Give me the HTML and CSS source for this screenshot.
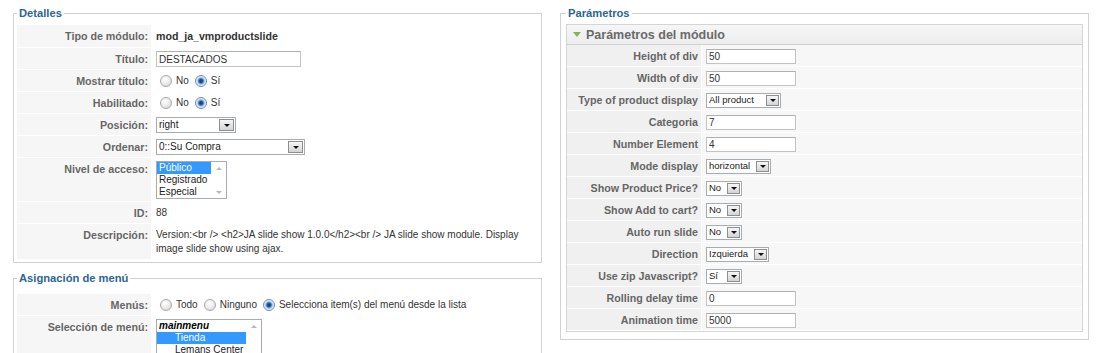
FILE: index.html
```html
<!DOCTYPE html>
<html lang="es">
<head>
  <meta charset="UTF-8">
  <title>Módulo: mod_ja_vmproductslide</title>
  <link rel="stylesheet" href="styles.css">
</head>
<body>

  <div class="page">

    <!-- Left column -->
    <div class="col">

      <fieldset class="box details">
        <legend>Detalles</legend>
        <div class="form">
          <div class="lbl">Tipo de módulo:</div>
          <div class="val text"><strong>mod_ja_vmproductslide</strong></div>

          <div class="lbl">Título:</div>
          <div class="val"><input class="txt" type="text" value="DESTACADOS"></div>

          <div class="lbl">Mostrar título:</div>
          <div class="val"><span class="radio"></span>No <span class="radio on"></span>Sí</div>

          <div class="lbl">Habilitado:</div>
          <div class="val"><span class="radio"></span>No <span class="radio on"></span>Sí</div>

          <div class="lbl">Posición:</div>
          <div class="val"><span class="sel w-pos">right<span class="arr"></span></span></div>

          <div class="lbl">Ordenar:</div>
          <div class="val"><span class="sel w-ord">0::Su Compra<span class="arr"></span></span></div>

          <div class="lbl">Nivel de acceso:</div>
          <div class="val">
            <div class="list list-access">
              <div class="opts">
                <div class="opt picked">Público</div>
                <div class="opt">Registrado</div>
                <div class="opt">Especial</div>
              </div>
              <div class="sb"><span class="up"></span><span class="down"></span></div>
            </div>
          </div>

          <div class="lbl">ID:</div>
          <div class="val text">88</div>

          <div class="lbl">Descripción:</div>
          <div class="val text desc">Version:&lt;br /&gt; &lt;h2&gt;JA slide show 1.0.0&lt;/h2&gt;&lt;br /&gt; JA slide show module. Display image slide show using ajax.</div>
        </div>
      </fieldset>

      <fieldset class="box menu">
        <legend>Asignación de menú</legend>
        <div class="form">
          <div class="lbl">Menús:</div>
          <div class="val"><span class="radio"></span>Todo <span class="radio"></span>Ninguno <span class="radio on"></span>Selecciona item(s) del menú desde la lista</div>

          <div class="lbl">Selección de menú:</div>
          <div class="val">
            <div class="list list-menu">
              <div class="opts">
                <div class="opt group">mainmenu</div>
                <div class="opt picked indent">Tienda</div>
                <div class="opt indent">Lemans Center</div>
              </div>
              <div class="sb"><span class="up"></span></div>
            </div>
          </div>
        </div>
      </fieldset>

    </div>

    <!-- Right column -->
    <div class="col">
      <fieldset class="box params">
        <legend>Parámetros</legend>
        <div class="panel">
          <div class="panel-head"><span class="tri"></span>Parámetros del módulo</div>
          <div class="form form-params">
            <div class="lbl">Height of div</div>
            <div class="val"><input class="txt txt-sm" type="text" value="50"></div>

            <div class="lbl">Width of div</div>
            <div class="val"><input class="txt txt-sm" type="text" value="50"></div>

            <div class="lbl">Type of product display</div>
            <div class="val"><span class="sel sel-sm" style="width:75px">All product<span class="arr"></span></span></div>

            <div class="lbl">Categoria</div>
            <div class="val"><input class="txt txt-sm" type="text" value="7"></div>

            <div class="lbl">Number Element</div>
            <div class="val"><input class="txt txt-sm" type="text" value="4"></div>

            <div class="lbl">Mode display</div>
            <div class="val"><span class="sel sel-sm" style="width:65px">horizontal<span class="arr"></span></span></div>

            <div class="lbl">Show Product Price?</div>
            <div class="val"><span class="sel sel-sm" style="width:36px">No<span class="arr"></span></span></div>

            <div class="lbl">Show Add to cart?</div>
            <div class="val"><span class="sel sel-sm" style="width:36px">No<span class="arr"></span></span></div>

            <div class="lbl">Auto run slide</div>
            <div class="val"><span class="sel sel-sm" style="width:36px">No<span class="arr"></span></span></div>

            <div class="lbl">Direction</div>
            <div class="val"><span class="sel sel-sm" style="width:63px">Izquierda<span class="arr"></span></span></div>

            <div class="lbl">Use zip Javascript?</div>
            <div class="val"><span class="sel sel-sm" style="width:36px">Sí<span class="arr"></span></span></div>

            <div class="lbl">Rolling delay time</div>
            <div class="val"><input class="txt txt-sm" type="text" value="0"></div>

            <div class="lbl">Animation time</div>
            <div class="val"><input class="txt txt-sm" type="text" value="5000"></div>
          </div>
        </div>
      </fieldset>
    </div>

  </div>

</body>
</html>
```

FILE: styles.css
```css
body {
  margin: 0;
  background: #fff;
  font-family: "Liberation Sans", Arial, sans-serif;
  font-size: 10px;
  color: #333;
  overflow: hidden;
}

.page {
  display: flex;
  gap: 18px;
  padding: 6px 0 0 13px;
}

.col {
  width: 529px;
}

/* Fieldsets */
.box {
  box-sizing: border-box;
  width: 529px;
  margin: 0;
  border: 1px solid #d2d2d2;
  padding: 5px 3px 2px;
}

.box legend {
  padding: 0 2px;
  color: #2b6597;
  font-size: 11.2px;
  font-weight: bold;
  line-height: 14px;
}

.menu {
  margin-top: 8px;
  padding-top: 9px;
  height: 120px;
}

.params {
  padding: 4px 5px 7px;
}

/* Form grid */
.form {
  display: grid;
  grid-template-columns: 135px 1fr;
}

.lbl {
  background: #f6f6f6;
  border-bottom: 1px solid #fff;
  border-right: 1px solid #fff;
  padding: 4px 3px 3px;
  line-height: 14px;
  text-align: right;
  font-size: 10.7px;
  font-weight: bold;
  color: #666;
}

.val {
  display: flex;
  align-items: center;
  border-bottom: 1px solid #fff;
  padding: 3px 0 2px 4px;
  line-height: 14px;
  white-space: nowrap;
}

.val.text {
  display: block;
  padding: 4px 0 3px 4px;
}

.val.desc {
  white-space: normal;
  padding-right: 14px;
}

.val strong {
  font-size: 10.6px;
  color: #333;
}

/* Inputs */
.txt {
  box-sizing: border-box;
  width: 145px;
  height: 16px;
  margin: 0;
  padding: 0 2px;
  border: 1px solid #c3c3c3;
  border-top-color: #b0b0b0;
  font: 10px "Liberation Sans", Arial, sans-serif;
  color: #333;
  background: #fff;
}

.txt-sm {
  width: 90px;
  height: 15px;
}

/* Radios */
.radio {
  display: inline-block;
  box-sizing: border-box;
  width: 12px;
  height: 12px;
  margin: 0 4px 0 4px;
  border: 1px solid #a9a9a9;
  border-radius: 50%;
  background: radial-gradient(circle at 40% 35%, #fff 0, #f0f0f0 40%, #d0d0d0 100%);
}

.val .radio:not(:first-child) {
  margin-left: 6px;
}

.radio.on {
  border-color: #6d8fb8;
  background: radial-gradient(circle, #1b3a68 0, #2c5a9a 2px, #7eaee4 3px, #cfe2f6 4px, #f4f8fd 6px);
}

/* Selects */
.sel {
  display: inline-flex;
  align-items: center;
  justify-content: space-between;
  box-sizing: border-box;
  height: 16px;
  padding-left: 2px;
  border: 1px solid #a5acb2;
  background: #fff;
  color: #222;
}

.w-pos { width: 80px; }
.w-ord { width: 149px; }

.sel-sm {
  height: 15px;
  font-size: 9.5px;
}

.arr {
  position: relative;
  box-sizing: border-box;
  width: 15px;
  height: 12px;
  margin-right: 1px;
  border: 1px solid #8e8e8e;
  background: linear-gradient(#f6f6f6, #d4d4d4);
}

.sel-sm .arr {
  width: 13px;
  height: 11px;
}

.arr::after {
  content: "";
  position: absolute;
  left: 50%;
  top: 4px;
  margin-left: -3px;
  border-left: 3px solid transparent;
  border-right: 3px solid transparent;
  border-top: 3px solid #111;
}

.sel-sm .arr::after {
  top: 3px;
}

/* List boxes */
.list {
  display: flex;
  box-sizing: border-box;
  border: 1px solid #a5acb2;
  background: #fff;
  overflow: hidden;
}

.list-access {
  width: 71px;
  height: 38px;
}

.list-menu {
  width: 106px;
  height: 70px;
}

.opts {
  flex: 1;
  line-height: 12px;
}

.opt {
  padding-left: 2px;
  color: #222;
}

.opt.picked {
  background: #3399ff;
  color: #fff;
}

.opt.group {
  font-weight: bold;
  font-style: italic;
  color: #000;
}

.opt.indent {
  padding-left: 18px;
}

.sb {
  width: 15px;
  display: flex;
  flex-direction: column;
  justify-content: space-between;
  align-items: center;
  padding: 5px 0 4px;
}

.sb .up,
.sb .down {
  width: 0;
  height: 0;
  border-left: 3px solid transparent;
  border-right: 3px solid transparent;
}

.sb .up { border-bottom: 3px solid #b8b8b8; }
.sb .down { border-top: 3px solid #b8b8b8; }

/* Parameters panel */
.panel {
  border: 1px solid #d5d5d5;
  background: #f7f7f7;
}

.panel-head {
  display: flex;
  align-items: center;
  height: 19px;
  border-bottom: 1px solid #d0d0d0;
  background: linear-gradient(#f6f6f6, #ededed);
  padding-left: 6px;
  font-size: 12.5px;
  font-weight: bold;
  color: #6a6a6a;
}

.tri {
  width: 0;
  height: 0;
  margin-right: 5px;
  border-left: 4px solid transparent;
  border-right: 4px solid transparent;
  border-top: 5px solid #86b352;
}

.form-params .lbl {
  background: #f0f0f0;
}
```
